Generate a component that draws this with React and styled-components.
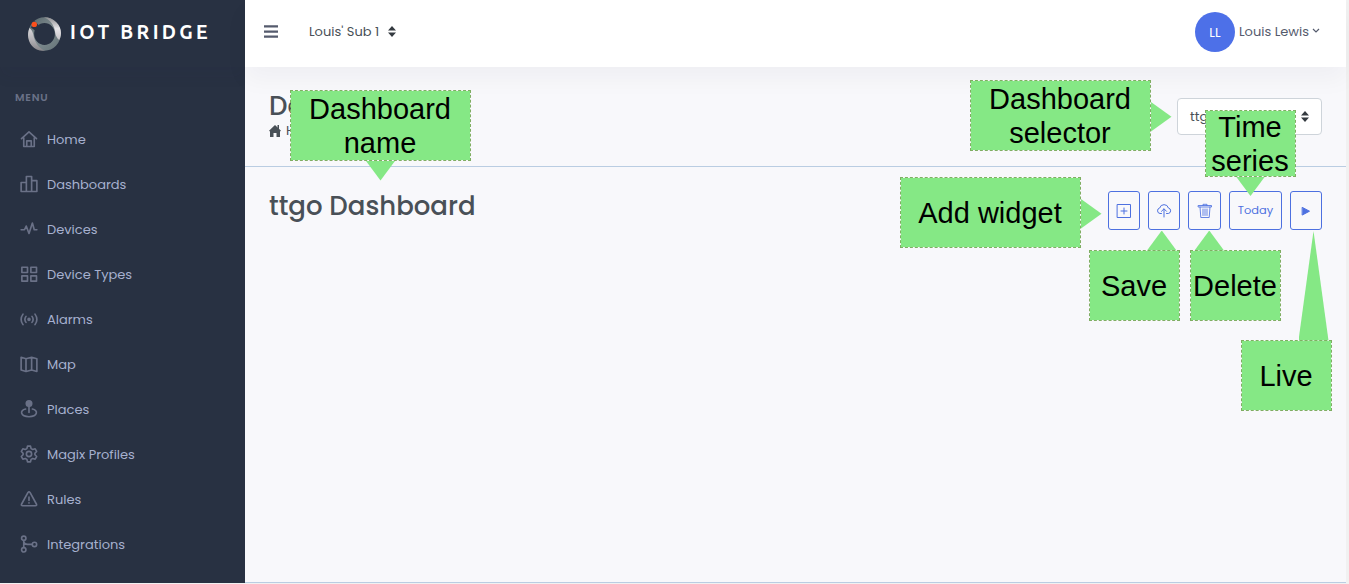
import React from "react";
import styled, { createGlobalStyle } from "styled-components";

const Global = createGlobalStyle`
  * { box-sizing: border-box; }
  html, body { margin: 0; height: 584px; overflow: hidden; background: #f1f1f1; }
  body { font-family: Poppins, Inter, "Open Sans", sans-serif; color: #495057; }
`;

const Page = styled.div`
  position: relative;
  display: flex;
  width: 1349px;
  height: 584px;
  padding-right: 3px;
  padding-bottom: 1px;
`;

const Sidebar = styled.aside`
  width: 245px;
  height: 583px;
  background: #283142;
  display: flex;
  flex-direction: column;
  flex: none;
`;

const Brand = styled.div`
  height: 67px;
  display: flex;
  align-items: center;
  gap: 8px;
  padding-left: 27px;
  box-shadow: 0 10px 14px rgba(36, 36, 70, 0.05);
`;

const BrandName = styled.span`
  font-family: Ubuntu, "Noto Sans", sans-serif;
  font-size: 19.5px;
  font-weight: 600;
  letter-spacing: 3.3px;
  color: #fff;
  white-space: nowrap;
  margin-top: -4px;
`;

const MenuTitle = styled.div`
  height: 50px;
  padding: 24px 0 0 15px;
  font-size: 10.6px;
  line-height: 14px;
  font-weight: 600;
  letter-spacing: 0.8px;
  color: #6a7187;
`;

const MenuItem = styled.a`
  display: flex;
  align-items: center;
  height: 45px;
  padding-left: 20px;
  gap: 9px;
  font-size: 13px;
  color: #a6b0cf;
  white-space: nowrap;
`;

const MenuIcon = styled.svg`
  width: 18px;
  height: 18px;
  flex: none;
  margin-top: -1px;
  fill: none;
  stroke: #6a7187;
  stroke-width: 2.2;
  stroke-linecap: round;
  stroke-linejoin: round;
`;

const Main = styled.main`
  flex: 1;
  display: flex;
  flex-direction: column;
  background: #f8f8fb;
  border-bottom: 1px solid #bacde2;
`;

const Topbar = styled.header`
  height: 67px;
  flex: none;
  display: flex;
  align-items: center;
  background: #fff;
  padding: 0 26px 4px 19px;
  box-shadow: 0 12px 24px rgba(18, 38, 63, 0.04);
  font-size: 13px;
`;

const Burger = styled.svg`
  width: 14px;
  height: 13px;
  fill: #555b6d;
  margin-top: -1px;
`;

const Account = styled.div`
  display: flex;
  align-items: center;
  margin-left: 31px;
  gap: 9px;
`;

const User = styled.div`
  margin-left: auto;
  display: flex;
  align-items: center;
  color: #555b6d;
`;

const Avatar = styled.div`
  width: 40px;
  height: 40px;
  border-radius: 50%;
  background: #4d70e8;
  color: #fff;
  display: flex;
  align-items: center;
  justify-content: center;
  margin-right: 4px;
  padding-top: 2px;
`;

const Chevron = styled.svg`
  width: 8px;
  height: 6px;
  margin: -1px 0 0 3px;
  fill: none;
  stroke: #555b6d;
  stroke-width: 1.2;
`;

const PageHead = styled.section`
  height: 100px;
  flex: none;
  display: flex;
  justify-content: space-between;
  padding: 23px 24px 0;
  border-bottom: 1px solid #bacde2;
`;

const Heading = styled.h1`
  margin: 0;
  font-size: 26px;
  line-height: ${(p) => p.$line || 31}px;
  font-weight: 500;
  white-space: nowrap;
`;

const Crumb = styled.div`
  display: flex;
  align-items: center;
  gap: 5px;
  height: 16px;
  font-size: 13px;
  color: #495057;
`;

const Select = styled.div`
  width: 145px;
  height: 37px;
  margin-top: 8px;
  border: 1px solid #ced4da;
  border-radius: 4px;
  background: #fff;
  display: flex;
  align-items: center;
  justify-content: space-between;
  padding: 0 12px;
  font-size: 13px;
`;

const BoardHead = styled.section`
  display: flex;
  justify-content: space-between;
  padding: 24px 24px 0;
`;

const Tools = styled.div`
  display: flex;
  gap: 8px;
`;

const ToolButton = styled.button`
  width: ${(p) => p.$w || 32}px;
  height: 39px;
  padding: 0;
  border: 1px solid #4d70e0;
  border-radius: 3px;
  background: transparent;
  color: #4d70e0;
  display: flex;
  align-items: center;
  justify-content: center;
  font: 400 11.4px Poppins, Inter, sans-serif;
`;

const ToolIcon = styled.svg`
  width: 16px;
  height: 16px;
  fill: none;
  stroke: currentColor;
  stroke-width: 1;
  stroke-linecap: round;
  stroke-linejoin: round;
`;

const Note = styled.div`
  position: absolute;
  left: ${(p) => p.$x}px;
  top: ${(p) => p.$y}px;
  width: ${(p) => p.$w}px;
  height: ${(p) => p.$h}px;
  display: flex;
  align-items: center;
  justify-content: center;
  padding-right: 1px;
  text-align: center;
  white-space: pre;
  background: #85e885 padding-box;
  border: 1px dashed #7fae62;
  font: 29px/34px "Liberation Sans", Arial, sans-serif;
  color: #000;
`;

const Pointer = styled.i`
  position: absolute;
  left: ${(p) => p.$x}px;
  top: ${(p) => p.$y}px;
  width: ${(p) => p.$w}px;
  height: ${(p) => p.$h}px;
  background: #85e885;
  clip-path: polygon(${(p) =>
    ({
      up: "50% 0, 100% 100%, 0 100%",
      down: "0 0, 100% 0, 50% 100%",
      right: "0 0, 100% 50%, 0 100%",
    })[p.$dir]});
`;

const menu = [
  ["Home", <path d="M2 11.500 12 2.500l10 9M5 10v12h14V10M9 22v-7.500h6V22" />],
  ["Dashboards", <path d="M1.500 10h7v12h-7zM8.500 2h7v20h-7zM15.500 7.500h7V22h-7z" />],
  ["Devices", <path d="M1.500 13H6l2.300-5L12 18l4.500-14L19 13h3.500" />],
  ["Device Types", <path d="M2.500 3H10v7H2.500zM14.500 3H22v7h-7.500zM2.500 14.500H10v7H2.500zM14.500 14.500H22v7h-7.500z" />],
  ["Alarms", <><path d="M4 5.500Q-1 12.500 4 19.500M20 5.500Q25 12.500 20 19.500M8 8.500Q5 12.500 8 16.500M16 8.500Q19 12.500 16 16.500" /><circle cx="12" cy="12.500" r="1.300" fill="#6a7187" /></>],
  ["Map", <path d="m1.500 3 6.500 2 7.500-2 7 2v17l-7-2L8 22l-6.500-2zM8 5v17M15.500 3v17" />],
  ["Places", <><circle cx="12" cy="4.800" r="3.600" fill="#6a7187" /><path d="M12 8v8.500M7.500 12C-1 13.800 .5 22.300 12 22.300S25 13.800 16.500 12" /></>],
  ["Magix Profiles", <><path d="M10 1.500h4l.8 3.300 2.200 1.200 3.200-.9 2 3.500-2.300 2.400v2l2.300 2.400-2 3.500-3.200-.9-2.200 1.200-.8 3.300h-4l-.8-3.300L7 18l-3.200.9-2-3.500L4.100 13v-2L1.800 8.600l2-3.500L7 6l2.200-1.200z" /><circle cx="12" cy="12" r="3.500" /></>],
  ["Rules", <path d="M10.500 3.500 2 19q-.8 2 1.500 2h17q2.300 0 1.500-2L13.500 3.500q-1.500-2-3 0zM12 9.500v4.500M12 17v.4" />],
  ["Integrations", <><circle cx="5" cy="4.300" r="2.900" /><circle cx="5" cy="19.700" r="2.900" /><circle cx="19.300" cy="12.500" r="2.900" /><path d="M5 7.500v9M5 9q1 3.500 5 3.500h6" /></>],
];

const Logo = () => (
  <svg width="35" height="36" viewBox="0 0 35 36">
    <defs>
      <linearGradient id="steel" x1="0" y1="0" x2="1" y2="1">
        <stop offset="0" stopColor="#5d6b6f" />
        <stop offset=".5" stopColor="#7e8b8f" />
        <stop offset="1" stopColor="#69777b" />
      </linearGradient>
      <linearGradient id="silver" x1="0" y1="0" x2="0" y2="1">
        <stop offset="0" stopColor="#8d8d90" />
        <stop offset=".5" stopColor="#e7e5e9" />
        <stop offset="1" stopColor="#c5c3c7" />
      </linearGradient>
      <linearGradient id="silverLow" x1="0" y1="0" x2="0" y2="1">
        <stop offset="0" stopColor="#d9d7db" />
        <stop offset=".5" stopColor="#b4b2b6" />
        <stop offset="1" stopColor="#88868a" />
      </linearGradient>
    </defs>
    <ellipse cx="17.500" cy="18" rx="13.300" ry="13.800" fill="none" stroke="url(#steel)" strokeWidth="5.800" />
    <path d="M17 1.200C27 1.200 34.200 9 34 17c0 3-.8 5.500-1.900 7C27.500 20 28.500 15 27 11.500 25 6.500 22 3 17 1.200z" fill="url(#silver)" />
    <path d="M2.500 12C6.500 15 6 19 7.500 23c2 6 6 10 10.500 11.700C8 36 1 28 1 19c0-3 .7-5 1.500-7z" fill="url(#silverLow)" />
    <path d="M4 11.500 7.500 5l4 4-3.500 5.500z" fill="#283142" />
    <circle cx="7.300" cy="8.400" r="2.700" fill="#fa4f1c" />
  </svg>
);

const Sort = () => (
  <svg width="8" height="11" viewBox="0 0 8 11" fill="#343a40">
    <path d="M4 0 8 4.400H0zM0 6.600h8L4 11z" />
  </svg>
);

export default function App() {
  return (
    <Page>
      <Global />
      <Sidebar>
        <Brand><Logo /><BrandName>IOT BRIDGE</BrandName></Brand>
        <MenuTitle>MENU</MenuTitle>
        {menu.map(([label, icon]) => (
          <MenuItem key={label}>
            <MenuIcon viewBox="0 0 24 24">{icon}</MenuIcon>
            {label}
          </MenuItem>
        ))}
      </Sidebar>
      <Main>
        <Topbar>
          <Burger viewBox="0 0 14 13"><path d="M0 .2h14v2.300H0zM0 5.400h14v2.300H0zM0 10.500h14v2.300H0z" /></Burger>
          <Account>Louis' Sub 1 <Sort /></Account>
          <User>
            <Avatar>LL</Avatar>
            Louis Lewis
            <Chevron viewBox="0 0 8 6"><path d="m1 1 3 3 3-3" /></Chevron>
          </User>
        </Topbar>
        <PageHead>
          <div>
            <Heading $line={33}>Dashboards</Heading>
            <Crumb>
              <svg width="12" height="12" viewBox="0 0 12 12" fill="#495057">
                <path d="M6 0 12 5.800 11 6.600V12H7.500V8h-3v4H1V6.600L0 5.800z" /><path d="M8.500 0H10v4H8.500z" />
              </svg>
              Home
            </Crumb>
          </div>
          <Select>ttgo <Sort /></Select>
        </PageHead>
        <BoardHead>
          <Heading>ttgo Dashboard</Heading>
          <Tools>
            <ToolButton aria-label="Add widget"><ToolIcon viewBox="0 0 16 16"><path d="M1.500 1.500h13v13h-13zM8 5v6M5 8h6" /></ToolIcon></ToolButton>
            <ToolButton aria-label="Save"><ToolIcon viewBox="0 0 16 16"><path d="M5.500 10.500H4a2.800 2.800 0 0 1-.3-5.500 4.500 4.500 0 0 1 8.700 0 2.800 2.800 0 0 1-.1 5.500h-1.800M8 14V6M5.500 8.300 8 5.800l2.500 2.500" /></ToolIcon></ToolButton>
            <ToolButton $w={33} aria-label="Delete"><ToolIcon viewBox="0 0 16 16"><path d="M1.500 2.500h13v1.500h-13zM6 2.500V1.300h4v1.200M3 4l.8 10.500h8.400L13 4M6 6v6.500M8 6v6.500M10 6v6.500" strokeWidth=".85" /></ToolIcon></ToolButton>
            <ToolButton $w={53}>Today</ToolButton>
            <ToolButton aria-label="Live"><ToolIcon viewBox="0 0 16 16"><path d="m4.500 4.500 7 3.700-7 3.700z" fill="currentColor" /></ToolIcon></ToolButton>
          </Tools>
        </BoardHead>
      </Main>
      <Pointer $dir="down" $x={366} $y={161} $w={29} $h={19.5} />
      <Pointer $dir="right" $x={1151} $y={102} $w={20.5} $h={29.5} />
      <Pointer $dir="down" $x={1236} $y={176.5} $w={29} $h={19.5} />
      <Pointer $dir="right" $x={1081} $y={199} $w={20.5} $h={29.5} />
      <Pointer $dir="up" $x={1147} $y={230.5} $w={29.5} $h={20} />
      <Pointer $dir="up" $x={1194.5} $y={230.5} $w={29.5} $h={20} />
      <Pointer $dir="up" $x={1298.5} $y={231} $w={30} $h={109.5} />
      <Note $x={290} $y={90} $w={181} $h={71}>{"Dashboard\nname"}</Note>
      <Note $x={970} $y={80} $w={181} $h={71}>{"Dashboard\nselector"}</Note>
      <Note $x={1205} $y={110} $w={91} $h={67}>{"Time\nseries"}</Note>
      <Note $x={900} $y={177} $w={181} $h={71}>Add widget</Note>
      <Note $x={1089} $y={250} $w={91} $h={71}>Save</Note>
      <Note $x={1190} $y={250} $w={91} $h={71}>Delete</Note>
      <Note $x={1241} $y={340} $w={91} $h={71}>Live</Note>
    </Page>
  );
}
